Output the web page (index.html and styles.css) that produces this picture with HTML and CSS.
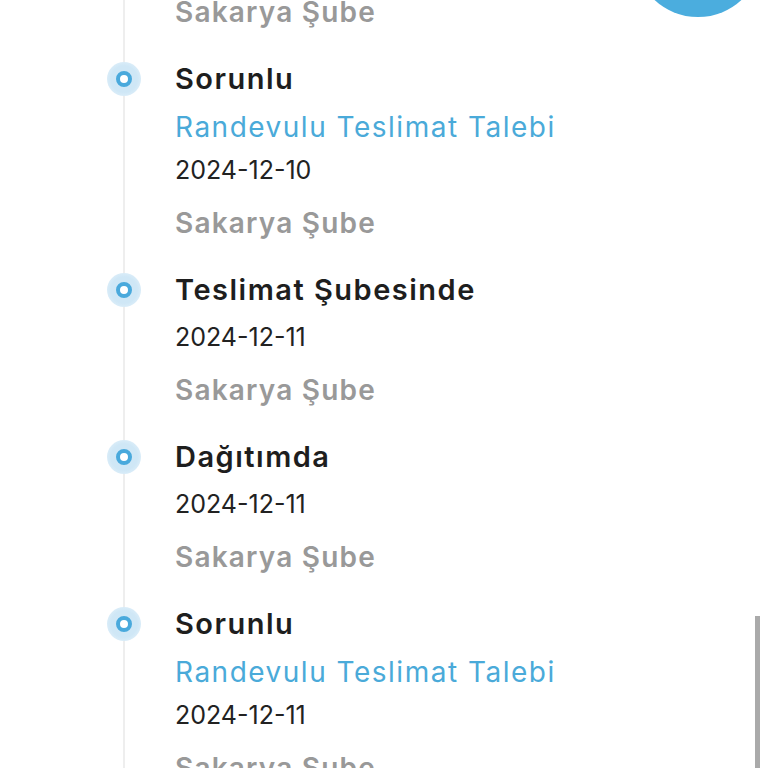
FILE: index.html
```html
<!DOCTYPE html>
<html lang="tr">
<head>
  <meta charset="UTF-8" />
  <meta name="viewport" content="width=device-width, initial-scale=1.0"/>
  <title>Kargo Takip</title>
  <link rel="stylesheet" href="styles.css">
</head>
<body>

  <div class="top-button"></div>

  <div class="timeline">
    <div class="step step-cut">
      <p class="branch">Sakarya Şube</p>
    </div>

    <div class="step">
      <span class="dot"></span>
      <p class="status">Sorunlu</p>
      <p class="note">Randevulu Teslimat Talebi</p>
      <p class="date">2024-12-10</p>
      <p class="branch">Sakarya Şube</p>
    </div>

    <div class="step">
      <span class="dot"></span>
      <p class="status">Teslimat Şubesinde</p>
      <p class="date">2024-12-11</p>
      <p class="branch">Sakarya Şube</p>
    </div>

    <div class="step">
      <span class="dot"></span>
      <p class="status">Dağıtımda</p>
      <p class="date">2024-12-11</p>
      <p class="branch">Sakarya Şube</p>
    </div>

    <div class="step">
      <span class="dot"></span>
      <p class="status">Sorunlu</p>
      <p class="note">Randevulu Teslimat Talebi</p>
      <p class="date">2024-12-11</p>
      <p class="branch">Sakarya Şube</p>
    </div>
  </div>

  <div class="scroll-thumb"></div>

</body>
</html>
```

FILE: styles.css
```css
body {
  margin: 0;
  background-color: #fff;
  font-family: Inter, "Noto Sans", sans-serif;
  height: 768px;
  overflow: hidden;
}
p {
  margin: 0;
  line-height: 40px;
  white-space: nowrap;
}
.top-button {
  position: absolute;
  top: -111px;
  left: 634px;
  width: 128px;
  height: 128px;
  border-radius: 50%;
  background-color: #4badde;
}
.timeline {
  margin-left: 123px;
  border-left: 2px solid #eeeeee;
  padding-left: 50px;
  min-height: 768px;
  box-sizing: border-box;
}
.step {
  position: relative;
  margin-bottom: 27px;
}
.step-cut {
  margin-top: -21px;
}
.dot {
  position: absolute;
  left: -68px;
  top: 3px;
  width: 34px;
  height: 34px;
  border-radius: 50%;
  background: radial-gradient(circle, #cfe7f6 55%, #e3f1fa 85%, #f4f9fd 100%);
}
.dot::after {
  content: "";
  position: absolute;
  left: 9px;
  top: 9px;
  width: 8px;
  height: 8px;
  border-radius: 50%;
  border: 4px solid #49a9dc;
  background-color: #fff;
}
.status {
  font-size: 29px;
  font-weight: 600;
  letter-spacing: 1.5px;
  color: #1e1e1e;
}
.note {
  margin-top: 8px;
  font-size: 28px;
  letter-spacing: 1.5px;
  color: #4aaad9;
}
.date {
  margin-top: 7px;
  font-size: 25px;
  color: #222;
}
.note + .date {
  margin-top: 3px;
}
.branch {
  margin-top: 13px;
  font-size: 28px;
  font-weight: 600;
  letter-spacing: 1.2px;
  color: #999;
}
.scroll-thumb {
  position: fixed;
  right: 8px;
  top: 616px;
  width: 5px;
  height: 152px;
  background-color: #aaa;
}
```
